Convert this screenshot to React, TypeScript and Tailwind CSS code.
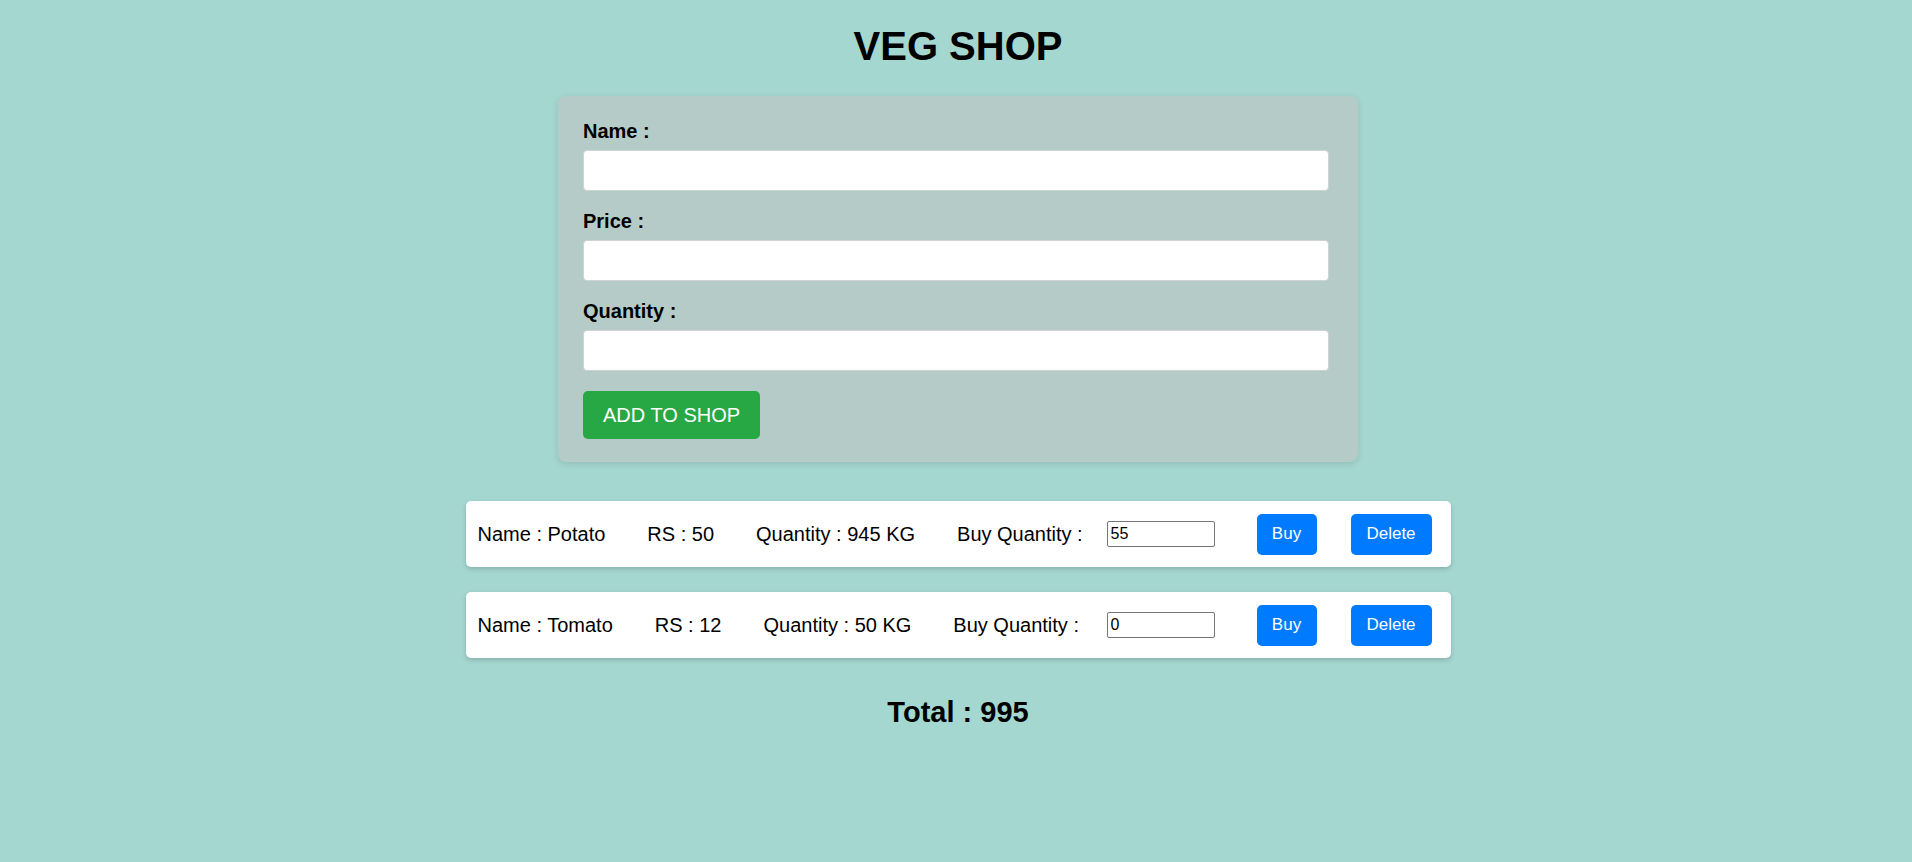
const items = [
  { name: "Potato", price: 50, qty: 945, buy: "55" },
  { name: "Tomato", price: 12, qty: 50, buy: "0" },
];

const Field = ({ label, last }: { label: string; last?: boolean }) => {
  return (
    <div className={last ? "mb-[20px]" : "mb-[19px]"}>
      <label className="block text-[20px] leading-[23px] font-bold text-black mb-[7px]">{label}</label>
      <input
        type="text"
        className="block w-full h-[41px] bg-white border border-[#cfd4d3] rounded-[4px] px-[10px] text-[16px] outline-none"
      />
    </div>
  );
};

export default function App() {
  return (
    <div
      className="min-h-screen bg-[#a4d7d0] pt-[23px] pl-[4px] text-black"
      style={{ fontFamily: '"Liberation Sans", Arial, sans-serif' }}
    >
      <h1 className="text-center text-[40px] leading-[46px] font-bold">VEG SHOP</h1>

      <div className="w-[800px] mx-auto mt-[27px] bg-[#b4cbc7] rounded-[8px] pt-[24px] pb-[23px] pl-[25px] pr-[29px] shadow-[0_2px_6px_rgba(0,0,0,0.12)]">
        <Field label="Name :" />
        <Field label="Price :" />
        <Field label="Quantity :" last />
        <button className="h-[48px] px-[20px] bg-[#28a745] text-white text-[20px] leading-[23px] rounded-[5px]">
          ADD TO SHOP
        </button>
      </div>

      <div className="w-[985px] mx-auto mt-[39px] flex flex-col gap-[25px]">
        {items.map((item) => (
          <div
            key={item.name}
            className="h-[66px] bg-white rounded-[5px] flex items-center pl-[12px] pr-[19px] shadow-[0_2px_5px_rgba(0,0,0,0.18)] text-[20px] leading-[23px]"
          >
            <span>Name : {item.name}</span>
            <span className="ml-[42px]">RS : {item.price}</span>
            <span className="ml-[42px]">Quantity : {item.qty} KG</span>
            <span className="ml-[42px]">Buy Quantity :</span>
            <div className="ml-auto flex items-center">
              <input
                type="text"
                defaultValue={item.buy}
                className="w-[108px] h-[26px] border border-[#767676] rounded-[2px] px-[3px] text-[16px] leading-[18px] outline-none"
              />
              <button className="ml-[42px] w-[60px] h-[41px] bg-[#007bff] text-white text-[17px] leading-[20px] rounded-[5px]">
                Buy
              </button>
              <button className="ml-[34px] w-[81px] h-[41px] bg-[#007bff] text-white text-[17px] leading-[20px] rounded-[5px]">
                Delete
              </button>
            </div>
          </div>
        ))}
      </div>

      <h2 className="text-center text-[29px] leading-[33px] font-bold mt-[38px]">Total : 995</h2>
    </div>
  );
}
